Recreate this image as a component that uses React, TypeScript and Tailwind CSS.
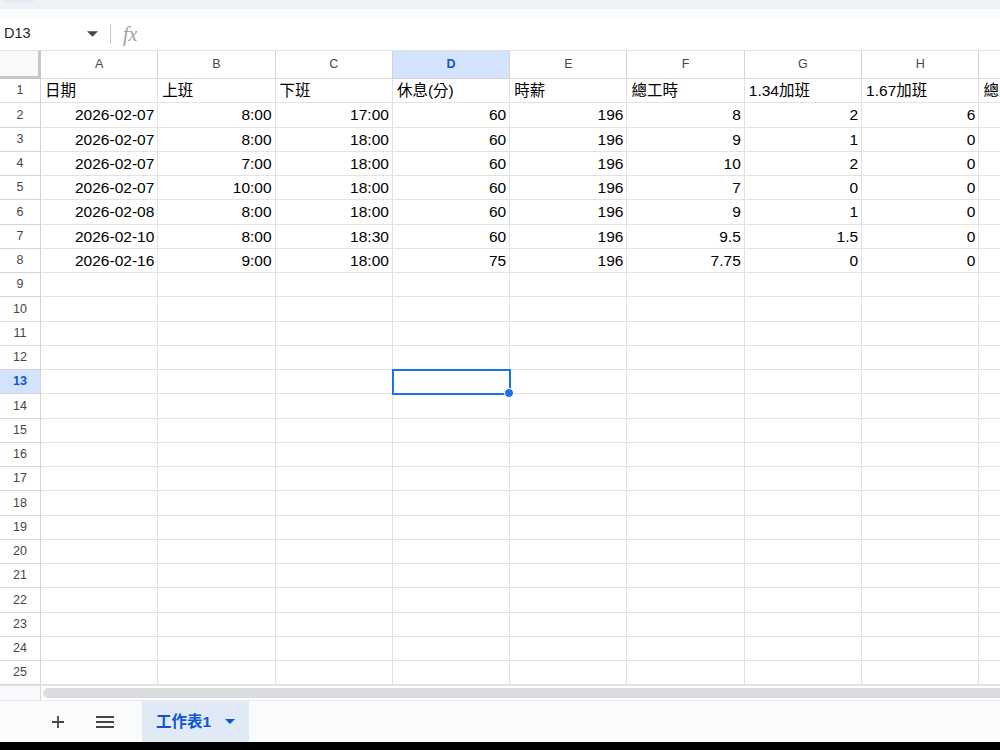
import React from "react";

const COLS = ["A", "B", "C", "D", "E", "F", "G", "H", "I"];

type Cell = { v: string; num?: boolean };

const header: Cell[] = [
  { v: "日期" },
  { v: "上班" },
  { v: "下班" },
  { v: "休息(分)" },
  { v: "時薪" },
  { v: "總工時" },
  { v: "1.34加班" },
  { v: "1.67加班" },
  { v: "總薪資" },
];

const raw: string[][] = [
  ["2026-02-07", "8:00", "17:00", "60", "196", "8", "2", "6"],
  ["2026-02-07", "8:00", "18:00", "60", "196", "9", "1", "0"],
  ["2026-02-07", "7:00", "18:00", "60", "196", "10", "2", "0"],
  ["2026-02-07", "10:00", "18:00", "60", "196", "7", "0", "0"],
  ["2026-02-08", "8:00", "18:00", "60", "196", "9", "1", "0"],
  ["2026-02-10", "8:00", "18:30", "60", "196", "9.5", "1.5", "0"],
  ["2026-02-16", "9:00", "18:00", "75", "196", "7.75", "0", "0"],
];

const rows: Cell[][] = [
  header,
  ...raw.map((r) => [...r.map((v) => ({ v, num: true })), { v: "" }]),
];
while (rows.length < 25) rows.push(COLS.map(() => ({ v: "" })));

const SEL_ROW = 13;
const SEL_COL = 3;

export default function App() {
  return (
    <div
      className="relative w-[1000px] h-[750px] overflow-hidden bg-white flex flex-col text-black"
      style={{ fontFamily: '"Liberation Sans", Arial, "Noto Sans CJK TC", sans-serif' }}
    >
      {/* browser chrome leftovers */}
      <div className="h-[9px] bg-[#eef1f6] flex">
        <div className="w-[32px] h-[3px] bg-[#e6eaf1] rounded-b-md ml-[2px]" />
      </div>
      <div className="h-[9px] bg-[#f9fbfd]" />

      {/* formula bar */}
      <div className="h-[33px] flex items-center border-b border-[#e1e3e1]">
        <div className="w-[104px] flex items-center justify-between pl-[4px] pr-[4px]">
          <span className="text-[14.5px] text-[#1f1f1f]">D13</span>
          <svg width="11" height="6" viewBox="0 0 10 5" className="mr-[2px]">
            <path d="M0 0 L10 0 L5 5 Z" fill="#444746" />
          </svg>
        </div>
        <div className="w-px h-[20px] bg-[#c7c7c7] ml-[6px]" />
        <span
          className="ml-[12px] text-[20px] italic text-[#9aa0a6] leading-none"
          style={{ fontFamily: '"Liberation Serif", serif' }}
        >
          fx
        </span>
      </div>

      {/* grid */}
      <div className="flex flex-col">
        <div className="flex h-[28px]">
          <div className="w-[41px] shrink-0 bg-[#f8f9fa] border-r-[3px] border-b-[3px] border-[#c4c7c5]" />
          {COLS.map((c, i) => (
            <div
              key={c}
              className={`w-[117.3px] shrink-0 flex items-center justify-center text-[12.5px] border-r border-b border-[#d5d5d5] ${
                i === SEL_COL ? "bg-[#d3e3fd] text-[#0b57d0] font-bold" : "bg-white text-[#444746]"
              }`}
            >
              {c}
            </div>
          ))}
        </div>
        {rows.map((r, ri) => (
          <div key={ri} className="flex h-[24.25px]">
            <div
              className={`w-[41px] shrink-0 flex items-center justify-center text-[12.5px] border-r border-b border-[#d5d5d5] ${
                ri + 1 === SEL_ROW ? "bg-[#d3e3fd] text-[#0b57d0] font-bold" : "bg-white text-[#444746]"
              }`}
            >
              {ri + 1}
            </div>
            {r.map((cell, ci) => (
              <div
                key={ci}
                className={`w-[117.3px] shrink-0 flex items-center text-[15.5px] border-r border-b border-[#e2e2e2] whitespace-nowrap overflow-hidden ${
                  cell.num ? "justify-end pr-[3px]" : "justify-start pl-[4px]"
                }`}
              >
                {cell.v}
              </div>
            ))}
          </div>
        ))}
      </div>

      {/* scrollbar */}
      <div className="h-[15px] flex border-t border-[#e2e2e2]">
        <div className="w-[41px] shrink-0 bg-[#f8f9fa] border-r border-[#d5d5d5]" />
        <div className="flex-1 bg-white flex items-center pl-[2px]">
          <div className="h-[10px] w-full bg-[#dadce0] rounded-l-full" />
        </div>
      </div>

      {/* sheet tabs */}
      <div className="h-[42px] bg-[#f9fbfd] border-t border-[#e8eaed] flex items-stretch">
        <div className="w-[142px] flex items-center">
          <svg width="14" height="14" viewBox="0 0 14 14" className="ml-[51px]">
            <path d="M7 1 V13 M1 7 H13" stroke="#444746" strokeWidth="1.8" />
          </svg>
          <svg width="18" height="12" viewBox="0 0 18 12" className="ml-[31px]">
            <path d="M0 1 H18 M0 6 H18 M0 11 H18" stroke="#444746" strokeWidth="1.8" />
          </svg>
        </div>
        <div className="w-[107px] bg-[#e1e9f7] flex items-center pl-[14px]">
          <span className="text-[15.5px] font-bold text-[#0b57d0]">工作表1</span>
          <svg width="10" height="5" viewBox="0 0 10 5" className="ml-[14px]">
            <path d="M0 0 L10 0 L5 5 Z" fill="#0b57d0" />
          </svg>
        </div>
      </div>
      <div className="flex-1 bg-black" />

      {/* selection overlay */}
      <div className="pointer-events-none absolute left-[392px] top-[369px] w-[119px] h-[26px] border-2 border-[#1a73e8]">
        <div className="absolute -right-[5px] -bottom-[5px] w-[8px] h-[8px] rounded-full bg-[#1a73e8] border border-white box-content" />
      </div>
    </div>
  );
}
